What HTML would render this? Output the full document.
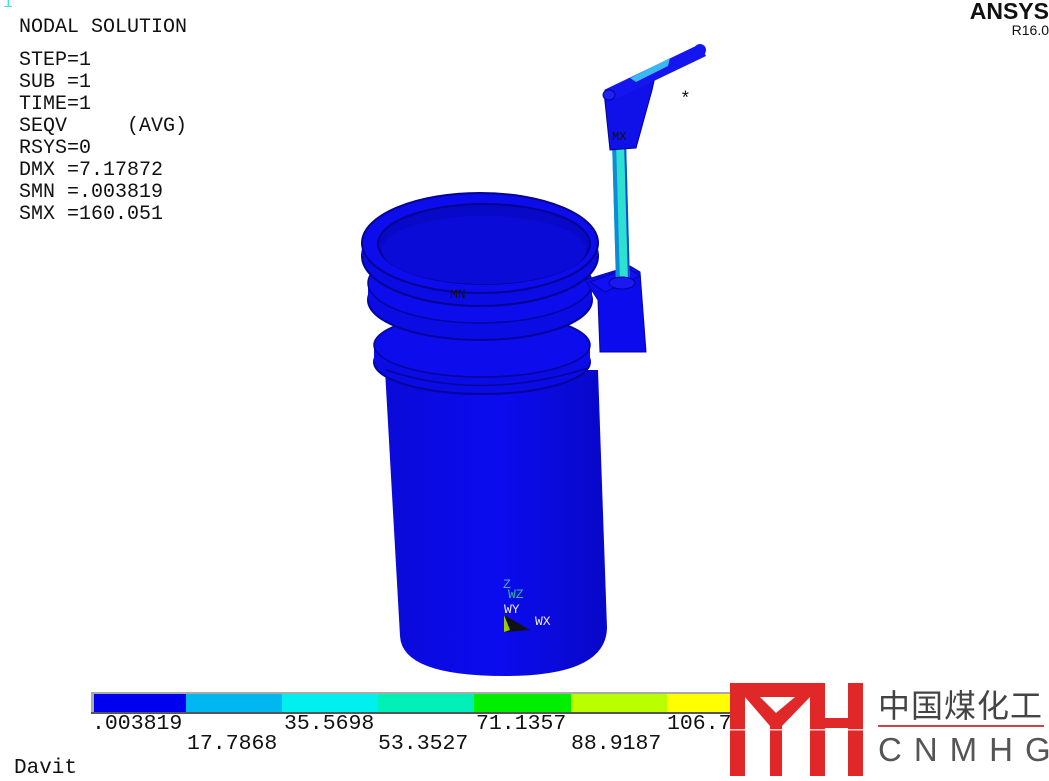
<!DOCTYPE html>
<html><head><meta charset="utf-8"><style>
html,body{margin:0;padding:0;background:#fff;width:1049px;height:781px;overflow:hidden;position:relative}
.m{font-family:"Liberation Mono",monospace;color:#111;position:absolute;white-space:pre}
.info{left:19px;top:17px;font-size:20px;line-height:22px}
.lbl{font-size:21.5px;line-height:22px}
</style></head><body>
<div class="m" style="left:3px;top:-6px;font-size:16px;color:#4dd">1</div>
<div class="m info">NODAL SOLUTION
<span style="display:block;height:11px"></span>STEP=1
SUB =1
TIME=1
SEQV     (AVG)
RSYS=0
DMX =7.17872
SMN =.003819
SMX =160.051</div>
<div style="position:absolute;right:0;top:-2px;font-family:'Liberation Sans',sans-serif;font-weight:bold;font-size:23px;color:#111">ANSYS</div>
<div style="position:absolute;right:0;top:22px;font-family:'Liberation Sans',sans-serif;font-size:14px;color:#111">R16.0</div>

<svg width="1049" height="781" style="position:absolute;left:0;top:0">
<defs>
<linearGradient id="cyl" x1="0" x2="1">
<stop offset="0" stop-color="#0a0ad8"/><stop offset=".5" stop-color="#0b0bf0"/><stop offset="1" stop-color="#0808c8"/></linearGradient>
</defs>
<!-- body -->
<path d="M385 370 L598 370 L607 628 Q606 676 505 676 Q402 676 400 636 Z" fill="url(#cyl)"/>
<!-- ring 3 -->
<ellipse cx="482" cy="362" rx="108" ry="32" fill="#0b0be4" stroke="#05059a" stroke-width="2"/>
<rect x="374" y="345" width="216" height="17" fill="#0c0cea"/>
<ellipse cx="482" cy="345" rx="108" ry="32" fill="#0c0cec" stroke="#05059a" stroke-width="1.5"/>
<path d="M386 370 Q482 402 588 368" stroke="#05059a" stroke-width="1.5" fill="none"/>
<!-- ring 2 -->
<ellipse cx="480" cy="300" rx="112" ry="40" fill="#0b0be4" stroke="#05059a" stroke-width="2"/>
<rect x="368" y="283" width="224" height="17" fill="#0c0cea"/>
<ellipse cx="480" cy="283" rx="112" ry="40" fill="#0c0cec" stroke="#05059a" stroke-width="1.5"/>
<!-- clamp block -->
<path d="M585 280 L630 266 L640 272 L646 352 L600 352 L598 300 Z" fill="#0b0bee" stroke="#0606a0" stroke-width="1"/>
<path d="M590 282 L628 268 L640 276 L605 292 Z" fill="#1010f4" stroke="#0606a0"/>
<!-- top flange -->
<ellipse cx="480" cy="256" rx="118" ry="50" fill="#0b0be4" stroke="#05058f" stroke-width="2"/>
<rect x="362" y="243" width="236" height="13" fill="#0c0cea"/>
<ellipse cx="480" cy="243" rx="118" ry="50" fill="#0c0cec" stroke="#05058f" stroke-width="2"/>
<ellipse cx="484" cy="244" rx="106" ry="40" fill="#0808c8" stroke="#05058f" stroke-width="2"/>
<ellipse cx="484" cy="250" rx="102" ry="34" fill="#0b0bd8"/>
<text x="450" y="298" font-family="Liberation Mono,monospace" font-size="13" fill="#111">MN</text>
<!-- post -->
<path d="M612 140 L626 140 L630 283 L616 283 Z" fill="#2de0d0"/>
<path d="M612 140 L616 140 L620 283 L616 283 Z" fill="#0b8bd8"/>
<path d="M624 140 L626 140 L630 283 L628 283 Z" fill="#0b4bd8"/>
<ellipse cx="622" cy="283" rx="13" ry="6" fill="#1a1af0" stroke="#05058f"/>
<!-- bracket -->
<path d="M604 92 L656 72 L652 90 L636 148 L610 150 Z" fill="#1010e8" stroke="#05058f"/>
<path d="M604 90 L700 44 L706 56 L614 100 Z" fill="#1515f0"/>
<path d="M630 78 L670 58 L668 66 L636 82 Z" fill="#3ab8f0"/>
<circle cx="700" cy="50" r="6" fill="#1515f0"/>
<ellipse cx="609" cy="95" rx="6" ry="5" fill="#2020f8" stroke="#05058f"/>
<text x="612" y="140" font-family="Liberation Mono,monospace" font-size="12" fill="#111">MX</text>
<text x="680" y="104" font-family="Liberation Mono,monospace" font-size="18" fill="#111">*</text>
<!-- axis triad -->
<text x="503" y="588" font-family="Liberation Mono,monospace" font-size="13" fill="#5ad">Z</text>
<text x="508" y="598" font-family="Liberation Mono,monospace" font-size="13" fill="#3b9">WZ</text>
<text x="504" y="613" font-family="Liberation Mono,monospace" font-size="13" fill="#eee">WY</text>
<text x="535" y="625" font-family="Liberation Mono,monospace" font-size="13" fill="#eee">WX</text>
<path d="M504 615 L504 632 L530 630 Z" fill="#111"/>
<path d="M504 615 L504 632 L510 630 Z" fill="#9c0"/>
<!-- legend bar -->
<rect x="91" y="692" width="680" height="22" fill="#aaa"/>
<rect x="94" y="694" width="92" height="18" fill="#0000f0"/>
<rect x="186" y="694" width="96" height="18" fill="#00b7f0"/>
<rect x="282" y="694" width="96" height="18" fill="#00f0f0"/>
<rect x="378" y="694" width="96" height="18" fill="#00f0b8"/>
<rect x="474" y="694" width="97" height="18" fill="#00ef00"/>
<rect x="571" y="694" width="96" height="18" fill="#b9ff00"/>
<rect x="667" y="694" width="100" height="18" fill="#ffff00"/>
<rect x="91" y="712" width="680" height="2" fill="#555"/>
<!-- logo -->
<rect x="730" y="683" width="300" height="95" fill="#fff"/>
<g fill="#e02828">
<rect x="730" y="683" width="15" height="93"/>
<rect x="730" y="683" width="80" height="14"/>
<polygon points="745,697 760,697 776,713 795,697 810,697 782,726 770,726"/>
<rect x="770" y="720" width="12" height="56"/>
<rect x="810" y="683" width="15" height="93"/>
<rect x="848" y="683" width="15" height="93"/>
<rect x="810" y="718" width="53" height="10"/>
</g>
<rect x="730" y="729" width="133" height="1.5" fill="#fff" opacity=".8"/>
<rect x="878" y="725" width="166" height="2" fill="#d84040"/>
</svg>
<div class="m lbl" style="left:92px;top:713px">.003819</div>
<div class="m lbl" style="left:284px;top:713px">35.5698</div>
<div class="m lbl" style="left:476px;top:713px">71.1357</div>
<div class="m lbl" style="left:667px;top:713px">106.7</div>
<div class="m lbl" style="left:187px;top:733px">17.7868</div>
<div class="m lbl" style="left:378px;top:733px">53.3527</div>
<div class="m lbl" style="left:571px;top:733px">88.9187</div>
<div class="m" style="left:14px;top:757px;font-size:21px;line-height:24px">Davit</div>
<div style="position:absolute;left:878px;top:684px;font-family:'Noto Sans CJK SC',sans-serif;font-size:32px;line-height:40px;color:#444;letter-spacing:1px">中国煤化工</div>
<div style="position:absolute;left:878px;top:731px;font-family:'Liberation Sans',sans-serif;font-size:33px;line-height:38px;color:#555;letter-spacing:12px">CNMHG</div>
</body></html>
